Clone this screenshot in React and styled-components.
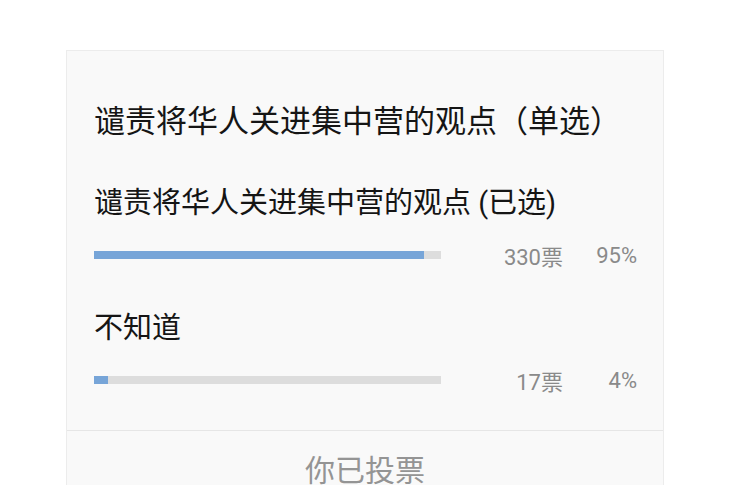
import React from 'react';
import styled, { createGlobalStyle } from 'styled-components';

const GlobalStyle = createGlobalStyle`
  html, body {
    margin: 0;
    padding: 0;
    background: #ffffff;
  }
  body {
    font-family: Roboto, "Noto Sans CJK SC", "Noto Sans", sans-serif;
  }
`;

const options = [
  { label: '谴责将华人关进集中营的观点 (已选)', votes: 330, percent: 95 },
  { label: '不知道', votes: 17, percent: 4 },
];

export default function App() {
  return (
    <>
      <GlobalStyle />
      <StyledPage>
        <StyledCard>
          <StyledBody>
            <StyledTitle>谴责将华人关进集中营的观点（单选）</StyledTitle>
            {options.map((opt) => (
              <StyledOption key={opt.label}>
                <StyledLabel>{opt.label}</StyledLabel>
                <StyledResult>
                  <StyledTrack>
                    <StyledFill style={{ width: `${opt.percent}%` }} />
                  </StyledTrack>
                  <StyledCount>{opt.votes}票</StyledCount>
                  <StyledCount>{opt.percent}%</StyledCount>
                </StyledResult>
              </StyledOption>
            ))}
          </StyledBody>
          <StyledFooter>你已投票</StyledFooter>
        </StyledCard>
      </StyledPage>
    </>
  );
}

const StyledPage = styled.div`
  padding-top: 50px;
  height: 485px;
  box-sizing: border-box;
  overflow: hidden;
`;

const StyledCard = styled.div`
  width: 598px;
  margin: 0 auto;
  background: #f9f9f9;
  border: 1px solid #ececec;
  box-sizing: border-box;
`;

const StyledBody = styled.div`
  padding: 51px 26px 36px 27px;
`;

const StyledTitle = styled.h2`
  margin: 0 0 41px;
  font-size: 31px;
  font-weight: 400;
  line-height: 40px;
  color: #151515;
`;

const StyledOption = styled.div`
  & + & {
    margin-top: 39px;
  }
`;

const StyledLabel = styled.div`
  font-size: 29px;
  line-height: 40px;
  color: #151515;
`;

const StyledResult = styled.div`
  display: grid;
  grid-template-columns: 347px 1fr 74px;
  align-items: center;
  height: 30px;
  margin-top: 16px;
`;

const StyledTrack = styled.div`
  height: 8px;
  background: #dddddd;
`;

const StyledFill = styled.div`
  height: 100%;
  background: #77a5d8;
`;

const StyledCount = styled.span`
  text-align: right;
  font-size: 22px;
  color: #8a8a8a;
`;

const StyledFooter = styled.div`
  border-top: 1px solid #e6e6e6;
  text-align: center;
  font-size: 30px;
  line-height: 80px;
  color: #949494;
`;
